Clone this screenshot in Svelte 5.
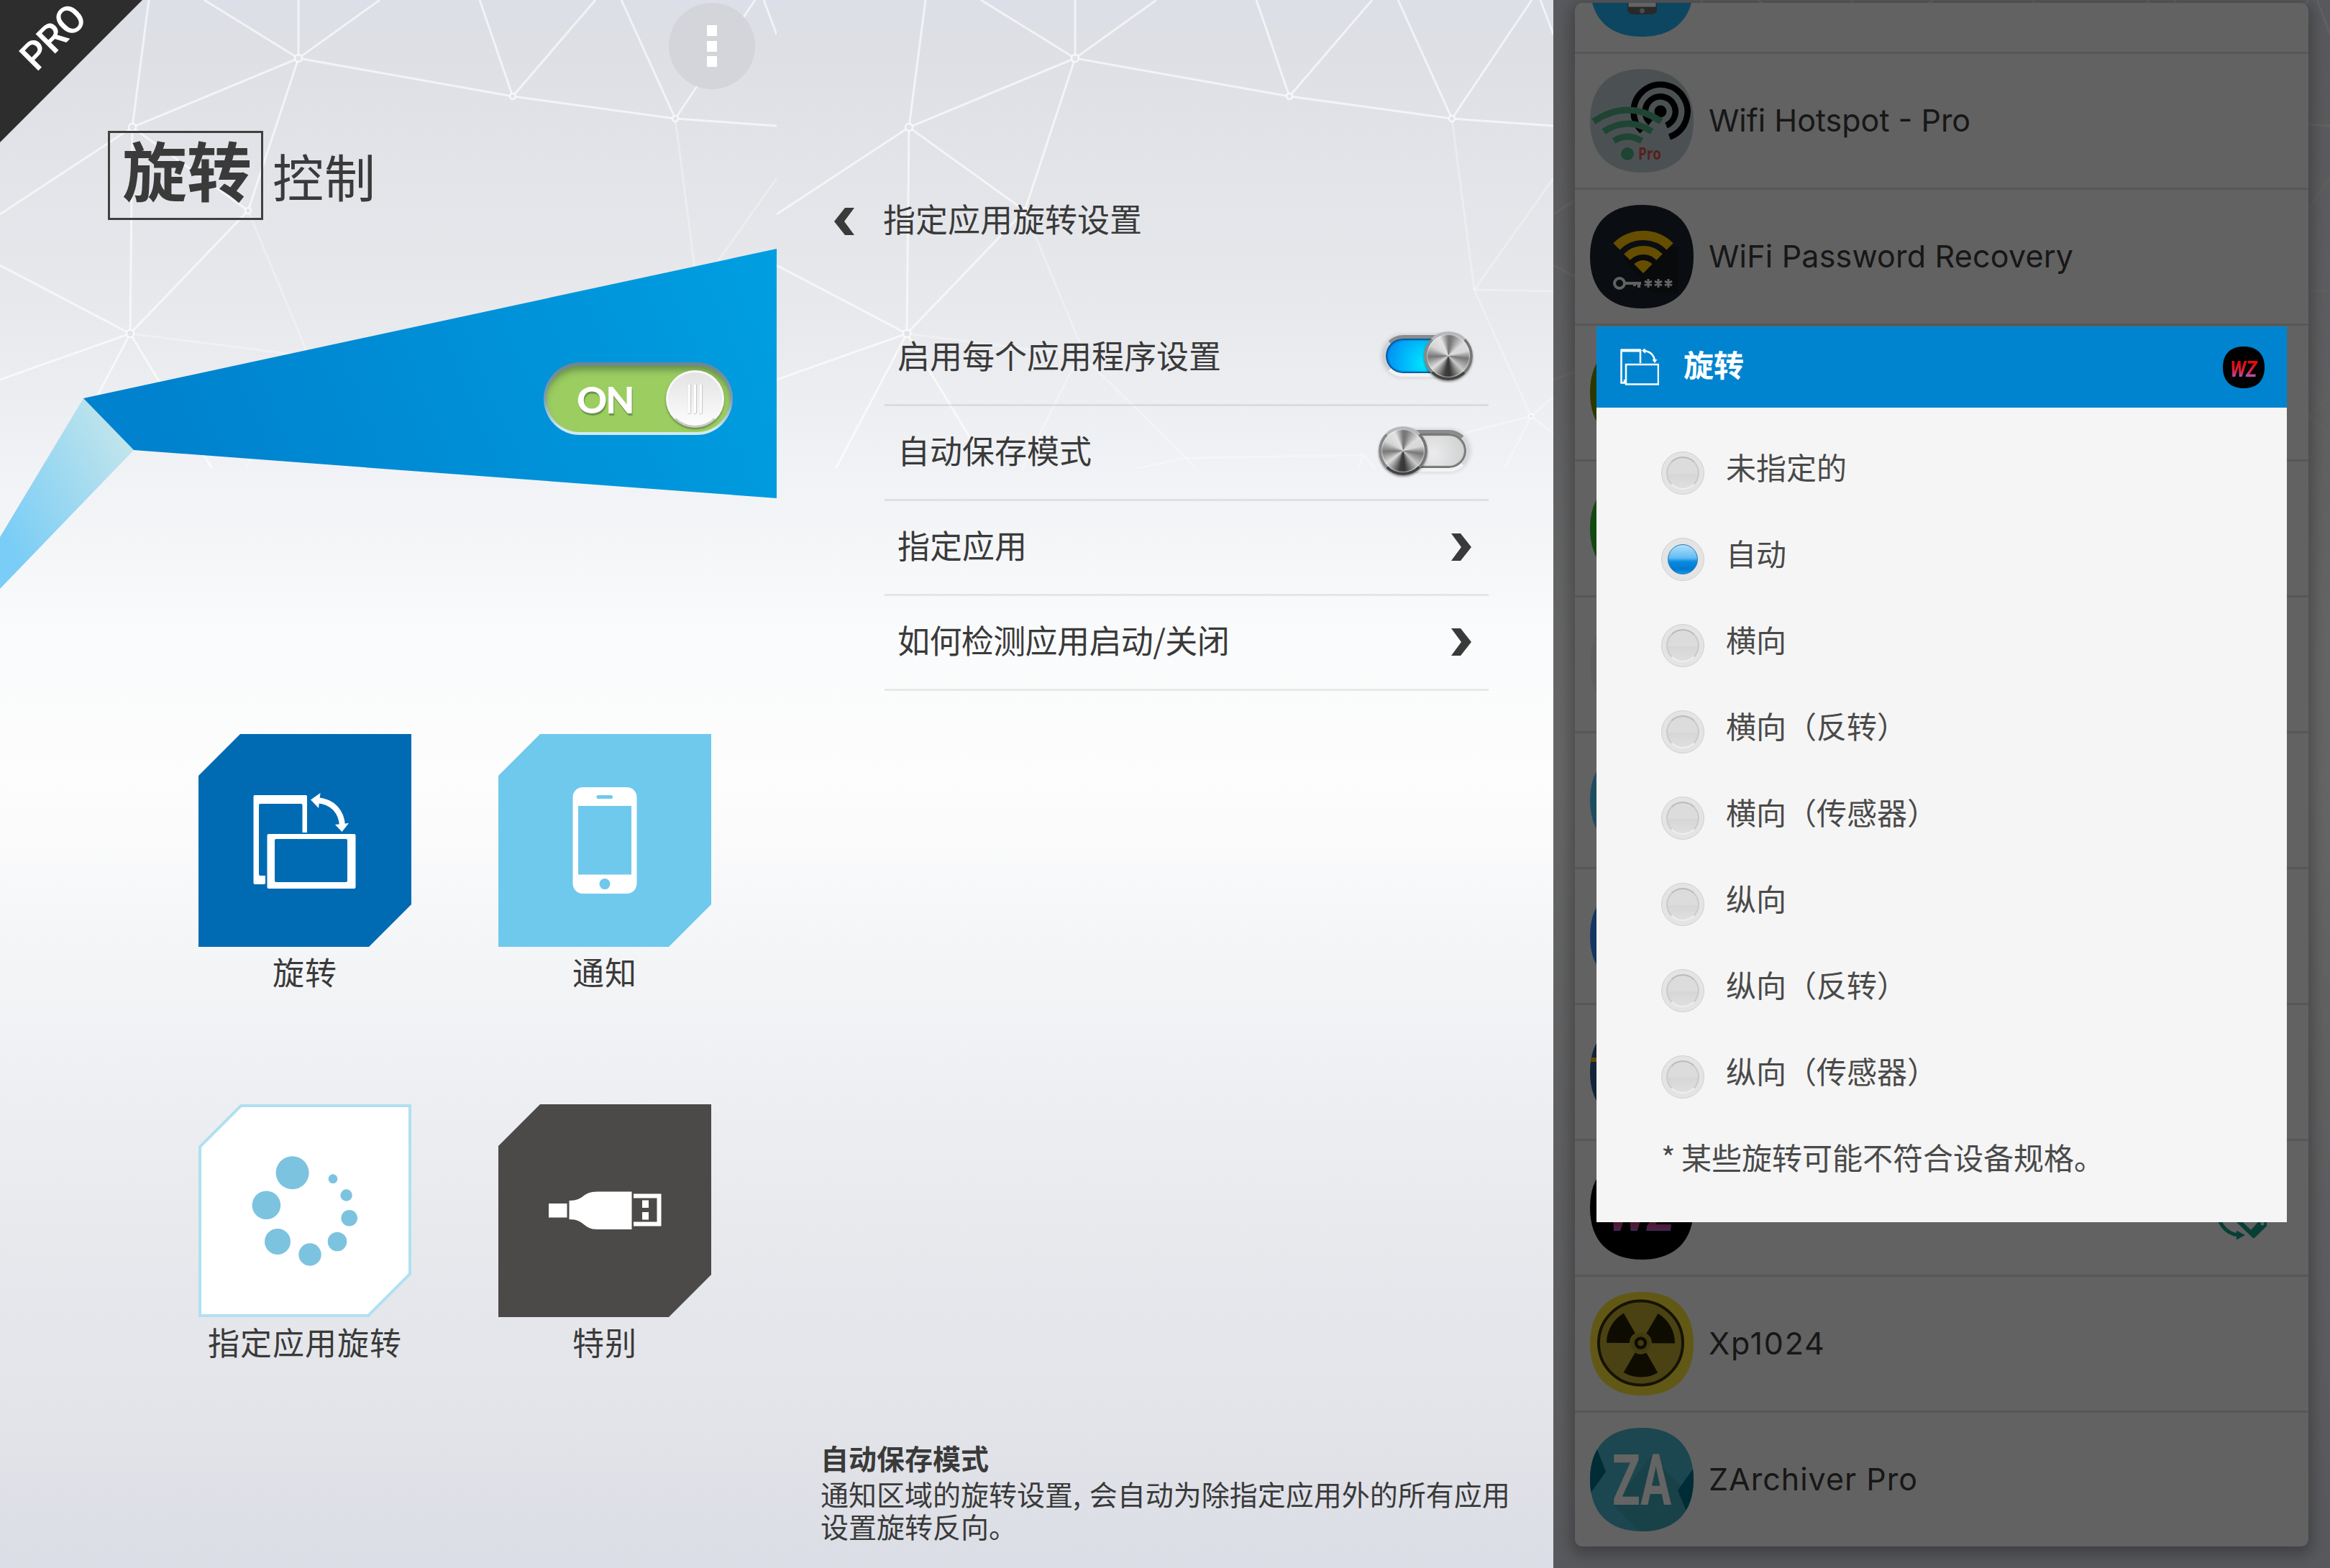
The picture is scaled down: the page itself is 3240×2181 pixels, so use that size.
<script>
  const lines = [
    [207, 0, 184, 177], [284, 0, 415, 81], [415, 0, 415, 81], [528, 0, 415, 81],
    [415, 81, 184, 177], [415, 81, 345, 293], [415, 81, 713, 134], [667, 0, 713, 134],
    [828, 0, 713, 134], [713, 134, 939, 165], [864, 0, 939, 165], [1050, 0, 939, 165],
    [1062, 0, 1080, 48], [939, 165, 1080, 175], [184, 177, 0, 298], [184, 177, 345, 293],
    [184, 177, 181, 464], [345, 293, 181, 464], [181, 464, 0, 369], [181, 464, 0, 528],
    [181, 464, 82, 652], [181, 464, 295, 652]
  ];
  const faint = [
    [939, 165, 970, 403], [970, 403, 1080, 248], [970, 403, 1080, 405], [970, 403, 1049, 579],
    [1049, 579, 1080, 552], [1049, 579, 1080, 603], [1049, 579, 1012, 652], [1049, 579, 955, 603],
    [345, 293, 425, 485], [425, 485, 342, 652], [181, 464, 425, 495], [425, 495, 570, 637],
    [570, 637, 498, 652], [570, 637, 817, 633], [817, 633, 808, 652], [817, 633, 832, 652], [570, 637, 582, 652]
  ];
  const nodes = [[415, 81, 5], [184, 177, 5], [713, 134, 4], [939, 165, 4], [181, 464, 5], [345, 293, 4], [1049, 579, 3]];

  const tiles = [
    { icon: 'rotate', label: '旋转', fill: '#006bb2' },
    { icon: 'phone', label: '通知', fill: '#6fc9ec' },
    { icon: 'dots', label: '指定应用旋转', fill: '#ffffff' },
    { icon: 'usb', label: '特别', fill: '#4b4a48' }
  ];
  const dots = [
    [130.6, 95.3, 23], [94.4, 140.3, 19.8], [110, 191, 18], [155, 209, 15.7],
    [193, 191, 13.3], [209.7, 158.3, 11.3], [205.6, 126.5, 8.2], [187, 103.7, 6.4]
  ];
  const settings = [
    { label: '启用每个应用程序设置', kind: 'on' },
    { label: '自动保存模式', kind: 'off' },
    { label: '指定应用', kind: 'link' },
    { label: '如何检测应用启动/关闭', kind: 'link', tight: true }
  ];
  const apps = [
    { icon: 'phone', color: '#22aff0', name: '' },
    { icon: 'hotspot', color: '#bccbd0', name: 'Wifi Hotspot - Pro', track: 0 },
    { icon: 'password', color: '#1b222d', name: 'WiFi Password Recovery', track: 0.2 },
    { icon: '', color: '#6b8f00', name: '' },
    { icon: '', color: '#2fb82f', name: '' },
    { icon: '', color: '#ececec', name: '' },
    { icon: '', color: '#4ec0f0', name: '' },
    { icon: '', color: '#3288f5', name: '' },
    { icon: 'stripe', color: '#325790', name: '' },
    { icon: 'wz', color: '#000000', name: '', rotates: true },
    { icon: 'radiation', color: '#f2dd38', name: 'Xp1024', track: 1.7 },
    { icon: 'archive', color: '#46b0c8', name: 'ZArchiver Pro', track: 1 }
  ];
  const options = ['未指定的', '自动', '横向', '横向（反转）', '横向（传感器）', '纵向', '纵向（反转）', '纵向（传感器）'];
  let selected = $state(1);
  const squircle = 'M72 0C118 0 144 26 144 72C144 118 118 144 72 144C26 144 0 118 0 72C0 26 26 0 72 0Z';
</script>

{#snippet mesh()}
  <svg class="mesh" viewBox="0 0 1080 652" preserveAspectRatio="none" aria-hidden="true">
    <g stroke="#fff" stroke-opacity=".62" stroke-width="3" fill="none">
      {#each lines as [x1, y1, x2, y2]}<line {x1} {y1} {x2} {y2} />{/each}
    </g>
    <g stroke="#fff" stroke-opacity=".3" stroke-width="3">
      {#each faint as [x1, y1, x2, y2]}<line {x1} {y1} {x2} {y2} />{/each}
    </g>
    {#each nodes as [cx, cy, r]}
      <circle {cx} {cy} {r} fill="#e2e3e9" stroke="#fff" stroke-opacity=".7" stroke-width="2.5" />
    {/each}
  </svg>
{/snippet}

{#snippet wz(size)}
  <svg class="wz" width={size} height={size} viewBox="0 0 144 144">
    <defs>
      <linearGradient id="wzfill" x1="0" y1="0" x2="0" y2="1">
        <stop offset=".3" stop-color="#e30c0c" /><stop offset=".62" stop-color="#d02a50" /><stop offset=".8" stop-color="#a95fd0" />
      </linearGradient>
    </defs>
    <path d={squircle} fill="#000" />
    <text x="25" y="104" font-size="78" textLength="92" lengthAdjust="spacingAndGlyphs" class="brush" fill="url(#wzfill)">WZ</text>
  </svg>
{/snippet}

<main>
  <section class="panel home">
    {@render mesh()}
    <div class="ribbon"><span>PRO</span></div>
    <button class="menu" aria-label="menu"><i></i><i></i><i></i></button>

    <h1><strong>旋转</strong><span>控制</span></h1>

    <div class="hero">
      <svg viewBox="0 346 1080 473" width="1080" height="473">
        <defs>
          <linearGradient id="wing" x1="0" y1="0" x2="1" y2="-.15">
            <stop offset="0" stop-color="#0082ce" /><stop offset="1" stop-color="#009fe2" />
          </linearGradient>
          <linearGradient id="fold" x1=".9" y1=".2" x2=".1" y2=".8">
            <stop offset="0" stop-color="#bfe4ec" /><stop offset="1" stop-color="#7acdf6" />
          </linearGradient>
        </defs>
        <polygon points="116,554 186,626 0,819 0,747" fill="url(#fold)" />
        <polygon points="116,554 1080,346 1080,693 186,626" fill="url(#wing)" />
      </svg>
      <div class="power"><span>ON</span><b><i></i><i></i><i></i></b></div>
    </div>

    <div class="tiles">
      {#each tiles as t}
        <div class="tile">
          <svg viewBox="0 0 296 296" width="296" height="296">
            {#if t.icon === 'dots'}
              <polygon points="59,2 294,2 294,236 236,294 2,294 2,59" fill="#fff" stroke="#b0e0f1" stroke-width="4" />
              {#each dots as [cx, cy, r]}<circle {cx} {cy} {r} fill="#7cc3df" />{/each}
            {:else}
              <polygon points="58,0 296,0 296,237 237,296 0,296 0,58" fill={t.fill} />
            {/if}
            {#if t.icon === 'rotate'}
              <path d="M78 85H149.500Q151 85 151 87V137H144.500V99Q144.500 97 142.500 97H86Q84 97 84 99V195Q84 197 86 197H93V207Q93 209 91 209H78.500Q76.500 209 76.500 207V87Q76.500 85 78 85Z" fill="#fff" />
              <path fill-rule="evenodd" d="M97.500 139H216.500Q218.500 139 218.500 141V213Q218.500 215 216.500 215H97.500Q95.500 215 95.500 213V141Q95.500 139 97.500 139ZM108 146Q106 146 106 148V204Q106 206 108 206H205Q207 206 207 204V148Q207 146 205 146Z" fill="#fff" />
              <path d="M165 92C187 94 199 108 200 128" stroke="#fff" stroke-width="8" fill="none" />
              <path d="M156 91.500L169.500 82L167 103ZM199.500 136L190 126L209 124Z" fill="#fff" />
            {:else if t.icon === 'phone'}
              <rect x="103.500" y="74" width="89" height="148" rx="14" fill="#fff" />
              <g fill={t.fill}>
                <rect x="111" y="100" width="74" height="95.500" /><rect x="136.500" y="85" width="22.500" height="5" rx="2.500" />
                <circle cx="148" cy="208.600" r="7.500" />
              </g>
            {:else if t.icon === 'usb'}
              <g fill="#fff">
                <rect x="70" y="138" width="25.500" height="19.500" />
                <path d="M98.500 134C121 134 115 121.500 138 121.500H185.500V174H138C117 174 121 160 98.500 160Z" />
                <path fill-rule="evenodd" d="M188 124.500H226.500V169.500H188V163.500H220.500V130.500H188Z" />
                <rect x="200" y="133.500" width="9" height="10.500" /><rect x="200" y="150" width="9" height="10.500" />
              </g>
            {/if}
          </svg>
          <p>{t.label}</p>
        </div>
      {/each}
    </div>
  </section>

  <section class="panel perapp">
    {@render mesh()}
    <header>
      <svg width="28" height="38" viewBox="0 0 28 38"><path d="M15 0H28L14 19L28 38H15L0 19Z" fill="#3a3a3a" /></svg>
      <h2>指定应用旋转设置</h2>
    </header>
    <ul>
      {#each settings as s}
        <li>
          <span class:tight={s.tight}>{s.label}</span>
          {#if s.kind === 'link'}
            <svg width="28" height="38" viewBox="0 0 28 38"><path d="M13 0H0L14 19L0 38H13L28 19Z" fill="#3a3a3a" /></svg>
          {:else}
            <div class="switch {s.kind}"><div class="track"></div><div class="knob"></div></div>
          {/if}
        </li>
      {/each}
    </ul>
    <footer>
      <strong>自动保存模式</strong>
      <p>通知区域的旋转设置<span class="comma">,</span>会自动为除指定应用外的所有应用<br />设置旋转反向。</p>
    </footer>
  </section>

  <section class="panel chooser">
    {@render mesh()}
    <div class="card">
      <ul class="apps">
        {#each apps as a}
          <li>
            {#if a.icon === 'wz'}
              {@render wz(144)}
            {:else}
              <svg class="appicon" width="144" height="144" viewBox="0 0 144 144">
                <clipPath id="mask"><path d={squircle} /></clipPath>
                <path d={squircle} fill={a.color} />
                {#if a.icon === 'phone'}
                  <rect x="52" y="10" width="41" height="103" rx="7" fill="#666" />
                  <rect x="53.500" y="20" width="38" height="82.500" fill="#fafafa" />
                  <circle cx="72.500" cy="108" r="3.500" fill="#bbb" />
                {:else if a.icon === 'hotspot'}
                  <g stroke="#000" stroke-width="8.500" fill="none">
                    <path d="M84 75A21 21 0 1 1 106 78.500" /><path d="M72.500 86.500A37.500 37.500 0 1 1 110.500 94.500" />
                  </g>
                  <circle cx="98" cy="59" r="8.500" fill="#000" />
                  <g stroke="#4faa80" stroke-width="9" fill="none">
                    <path d="M5 73Q52 41 99 73" /><path d="M19 87Q52 65 86 87" /><path d="M33 100Q52 88 72 100" />
                  </g>
                  <circle cx="52" cy="118" r="9" fill="#4faa80" />
                  <text x="67" y="126" class="pro" textLength="32" lengthAdjust="spacingAndGlyphs">Pro</text>
                {:else if a.icon === 'password'}
                  <path d="M122 57V122H84L45 72Z" fill="#151a20" />
                  <g fill="none" stroke="#ffc300">
                    <path d="M36.900 57.900A52.500 52.500 0 0 1 111.100 57.900" stroke-width="13" />
                    <path d="M51.400 72.400A32 32 0 0 1 96.600 72.400" stroke-width="12" />
                  </g>
                  <path d="M74 95L61.300 82.300A18 18 0 0 1 86.700 82.300Z" fill="#ffc300" />
                  <g fill="none" stroke="#f4f4f4">
                    <circle cx="41" cy="109" r="7" stroke-width="4" /><path d="M48 109H71M62 109V113M68 109V115" stroke-width="4" />
                    <path d="M81 103V115M76 106L86 112M76 112L86 106M95 103V115M90 106L100 112M90 112L100 106M109 103V115M104 106L114 112M104 112L114 106" stroke-width="3" />
                  </g>
                {:else if a.icon === 'stripe'}
                  <path d="M2 52H20V58H1Z" fill="#f0c000" />
                {:else if a.icon === 'radiation'}
                  <circle cx="70.500" cy="71" r="57" fill="#ae9c2c" opacity=".85" />
                  <circle cx="70.500" cy="71" r="58.500" stroke="#382f08" stroke-width="4" fill="none" />
                  <circle cx="70.500" cy="71" r="31.500" stroke="#241d04" stroke-width="32" fill="none" stroke-dasharray="32.990 32.990" transform="rotate(60 70.500 71)" />
                  <circle cx="70.500" cy="71" r="14" fill="#a5932a" />
                  <circle cx="70.500" cy="71" r="6.500" stroke="#241d04" stroke-width="4.500" fill="none" />
                {:else if a.icon === 'archive'}
                  <g clip-path="url(#mask)">
                    <path d="M32 107L85 39L144 98V144H69Z" fill="#3fa4b5" />
                    <path d="M10 30L22 61L0 92V30ZM144 56L122 87L134 116L144 116Z" fill="#006e86" />
                  </g>
                  <text x="31" y="107" class="za" textLength="82" lengthAdjust="spacingAndGlyphs">ZA</text>
                {/if}
              </svg>
            {/if}
            <span style:letter-spacing="{a.track ?? 0}px">{a.name}</span>
            {#if a.rotates}
              <svg class="turn" width="76" height="88" viewBox="0 0 76 88">
                <path d="M5 38Q9 76 36 80" stroke="#179c88" stroke-width="5" fill="none" />
                <path d="M34 73.500L46 80L34 86.500Z" fill="#179c88" />
                <path d="M26 50L58 81L80 59" stroke="#179c88" stroke-width="6" stroke-linejoin="round" fill="none" />
                <path d="M58 82L52 75L71 54L78 62Z" fill="#179c88" /><circle cx="70" cy="64" r="2.500" fill="#f4f4f4" />
              </svg>
            {/if}
          </li>
        {/each}
      </ul>
    </div>
    <div class="scrim"></div>
    <div class="dialog">
      <header>
        <svg width="54" height="51" viewBox="0 0 54 51" fill="none" stroke="#fff" stroke-width="2.500">
          <path d="M28 20V2H1.500V47.500H6V43" /><path d="M1 2.500H28" stroke-width="4" />
          <rect x="8" y="22" width="45" height="27.500" />
          <path d="M33 3C42 4 47 9 48 17" /><path d="M30 2.500L35 -1V7ZM48 20L44.500 15H51.500Z" fill="#fff" stroke="none" />
        </svg>
        <h3>旋转</h3>
        {@render wz(58)}
      </header>
      <ul>
        {#each options as o, i}
          <li onclick={() => (selected = i)} role="presentation">
            <i class="radio" class:checked={selected === i}></i><span>{o}</span>
          </li>
        {/each}
      </ul>
      <p><span>*</span>某些旋转可能不符合设备规格。</p>
    </div>
  </section>
</main>

<style>
  main {
    display: grid;
    grid-template-columns: repeat(3, 1080px);
    width: 3240px;
    height: 2181px;
    color: #3a3a3a;
    font-family: 'Noto Sans CJK SC', sans-serif;
    overflow: hidden;
  }
  ul, h1, h2, h3, p { margin: 0; padding: 0; list-style: none; }
  svg { display: block; flex: none; }
  .panel {
    position: relative;
    height: 2181px;
    box-sizing: border-box;
    overflow: hidden;
    isolation: isolate;
    background: linear-gradient(#dcdfe8 0, #dedfe4 2.5%, #e8e9ed 20%, #f1f2f5 30%, #fafbfc 41%, #fdfdfd 50%, #f4f5f7 61%, #e9eaee 77%, #e2e3e8 92%, #dbdde6 100%);
  }
  .mesh { position: absolute; top: 0; left: 0; width: 1080px; height: 652px; z-index: -1; }

  .home { display: flex; flex-direction: column; padding-top: 182px; }
  .ribbon {
    position: absolute; top: 0; left: 0; width: 198px; height: 198px;
    background: #2d2d2d; clip-path: polygon(0 0, 100% 0, 0 100%);
    color: #fff; font: 500 54px/60px Roboto, sans-serif;
  }
  .ribbon span { position: absolute; left: 14px; top: 22px; width: 120px; text-align: center; transform: rotate(-45deg); letter-spacing: -1px; }
  .menu {
    position: absolute; top: 4px; left: 930px; width: 120px; height: 120px; border: 0; padding: 0;
    border-radius: 50%; background: #d4d5da;
    display: flex; flex-direction: column; align-items: center; justify-content: center; gap: 6.500px;
  }
  .menu i { width: 14px; height: 15px; background: #fff; }
  h1 { display: flex; margin-left: 150px; height: 124px; font-weight: 400; color: #3a3a3a; }
  h1 strong {
    box-sizing: border-box; width: 216px; border: 3px solid #3e423e; padding-left: 17px;
    font-size: 90px; font-weight: 700; line-height: 98px;
  }
  h1 span { margin-left: 13px; font-size: 71px; letter-spacing: 1px; line-height: 123px; }
  .hero { position: relative; margin-top: 40px; height: 473px; }
  .power {
    position: absolute; left: 756px; top: 158px; width: 263px; height: 101px; box-sizing: border-box;
    border-radius: 51px; padding: 5px 4px 4px;
    background: linear-gradient(#6b8791, #7f9dad 50%, #cfe9f4 92%);
  }
  .power::before { content: ''; display: block; height: 100%; border-radius: 48px; background: #9bcd61; box-shadow: inset 0 9px 12px -5px #5d8044; }
  .power span {
    position: absolute; left: 46px; top: 16px; color: #fff; font: 900 52px/70px Lato, sans-serif; letter-spacing: -2px;
    text-shadow: 1px 3px 1px #6c9447;
  }
  .power b {
    position: absolute; left: 170px; top: 11px; width: 81px; height: 80px; border-radius: 50%; box-sizing: border-box;
    display: flex; align-items: center; justify-content: center; gap: 5px;
    background: linear-gradient(#e3e3e3, #fdfdfd); border: 3px solid #f8f8f8; border-bottom-color: #c9c9c9;
    box-shadow: 0 2px 3px #5f803f;
  }
  .power i { width: 3px; height: 40px; background: #fff; box-shadow: 1px 0 1px #c4c4c4, 0 1px 1px #c4c4c4; }
  .tiles {
    display: grid; grid-template-columns: repeat(2, 296px); column-gap: 121px; grid-auto-rows: 514.500px;
    margin: 202px 0 0 276px;
  }
  .tile { display: flex; flex-direction: column; align-items: center; }
  .tile p { margin-top: 3px; font-size: 44px; letter-spacing: 1px; line-height: 62px; white-space: nowrap; }

  .perapp { display: flex; flex-direction: column; }
  .perapp header { display: flex; align-items: center; margin: 274px 0 0 80px; height: 66px; padding-top: 2px; box-sizing: border-box; }
  h2 { margin-left: 40px; font-size: 45px; font-weight: 400; line-height: 60px; }
  .perapp header h2 { position: relative; top: -4px; }
  .perapp ul { margin: 93px 90px 0 150px; }
  .perapp li {
    display: flex; align-items: center; justify-content: space-between; height: 132px; box-sizing: border-box;
    padding: 0 24px 8px 18px; border-bottom: 3px solid #00000014; font-size: 45px;
  }
  .tight { letter-spacing: -.6px; }
  .perapp li > svg { margin-top: 6px; }
  .switch { position: relative; width: 123px; height: 70px; margin: 5px 1px 0 0; }
  .switch.on { margin-right: -1px; }
  .track {
    position: absolute; top: 5px; width: 112px; height: 58px; box-sizing: border-box; border-radius: 30px;
    border: 5px solid; border-color: #8b8b8b #d8d8da #f3f3f3 #d0d0d2;
  }
  .on .track { left: -2px; background: radial-gradient(circle at 56px 34px, #00eaff, #00aaf8 40px, #0087ee 60px); box-shadow: inset 0 0 2px 2px #0b4f90, 0 0 5px 2px #00000018; }
  .off .track { right: 1px; background: radial-gradient(circle at 56px 28px, #ececee, #d2d3d3 40px, #c2c2c2); box-shadow: inset 0 0 1px 3px #777, 0 0 5px 2px #00000018; }
  .knob {
    position: absolute; top: 0; width: 68px; height: 68px; box-sizing: border-box; border-radius: 50%;
    border: 4px solid; border-color: #b5b9b9 #777 #444 #888;
    background: conic-gradient(#777 0deg, #7a7a7a 10deg, #dcdcdc 50deg, #d8d8d8 75deg, #767676 98deg, #c8c8c8 135deg, #363636 175deg, #3e3e3e 190deg, #dedede 232deg, #777 268deg, #d4d4d4 300deg, #e4e4e4 335deg, #777 360deg);
    background-clip: padding-box;
    box-shadow: inset 0 0 1px 1px #ffffff90, 0 2px 3px #0006;
  }
  .on .knob { right: -1px; }
  .off .knob { left: -5px; }
  footer { margin: 1041px 0 0 61px; font-size: 39px; line-height: 45px; }
  footer strong { display: block; line-height: 50px; margin-bottom: 3px; }
  footer p { white-space: nowrap; }
  .comma { letter-spacing: 12px; }

  .chooser { padding: 4px 30px 0; }
  .card { height: 2147px; overflow: hidden; border-radius: 10px; background: #f4f4f4; box-shadow: 0 6px 20px 6px #0004; }
  .apps { margin-top: -118px; }
  .apps li {
    display: flex; align-items: center; gap: 21px; height: 189px; box-sizing: border-box; padding: 0 21px;
    border-bottom: 3px solid #d9d9d9; font: 400 43px/50px Inter, sans-serif; color: #3a3a3a;
  }
  .apps li > span { margin-top: -3px; }
  .apps li:last-child { border-bottom: 0; padding-bottom: 3px; }
  .turn { margin: 4px 37px 0 auto; }
  .pro { font: 700 23px 'Open Sans', sans-serif; fill: #d85050; }
  .za { font: 700 99px Roboto, sans-serif; fill: #fafafa; }
  .brush { font-family: Roboto, sans-serif; font-weight: 700; font-style: italic; }
  .scrim { position: absolute; inset: 0; background: #0009; }
  .dialog { position: absolute; left: 60px; top: 454px; width: 960px; height: 1246px; background: #f5f5f5; color: #4a4a4a; }
  .dialog header { display: flex; align-items: center; height: 113px; padding: 0 31px 0 33px; background: #0084d0; color: #fff; }
  h3 { margin: -10px auto 0 34px; font-size: 42px; line-height: 60px; font-weight: 700; }
  .dialog ul { padding: 27px 0 0 90px; }
  .dialog li { display: flex; align-items: center; gap: 30px; height: 120px; font-size: 42px; }
  .dialog li span { margin-top: -12px; }
  .radio {
    position: relative; top: 4px; width: 60px; height: 60px; box-sizing: border-box; border-radius: 50%;
    border: 1.500px solid #d0d0d0; background: #e4e4e4; display: grid; place-items: center;
  }
  .radio::after {
    content: ''; width: 46px; height: 46px; box-sizing: border-box; border-radius: 50%;
    background: linear-gradient(#dcdcdc 52%, #d6d6d6 52%, #dfdfdf); border: 2.500px solid; border-color: #bababa #cacaca #efefef;
  }
  .radio.checked::after { width: 42px; height: 42px; border: 1.500px solid #287bb0; background: linear-gradient(#b5e0fb, #5fbcf3 45%, #0a8ae2 58%, #0079cf 85%, #169be8); }
  .dialog p { margin: -5px 0 0 90px; font-size: 42px; line-height: 120px; }
  .dialog p span { display: inline-block; width: 28px; }
</style>
